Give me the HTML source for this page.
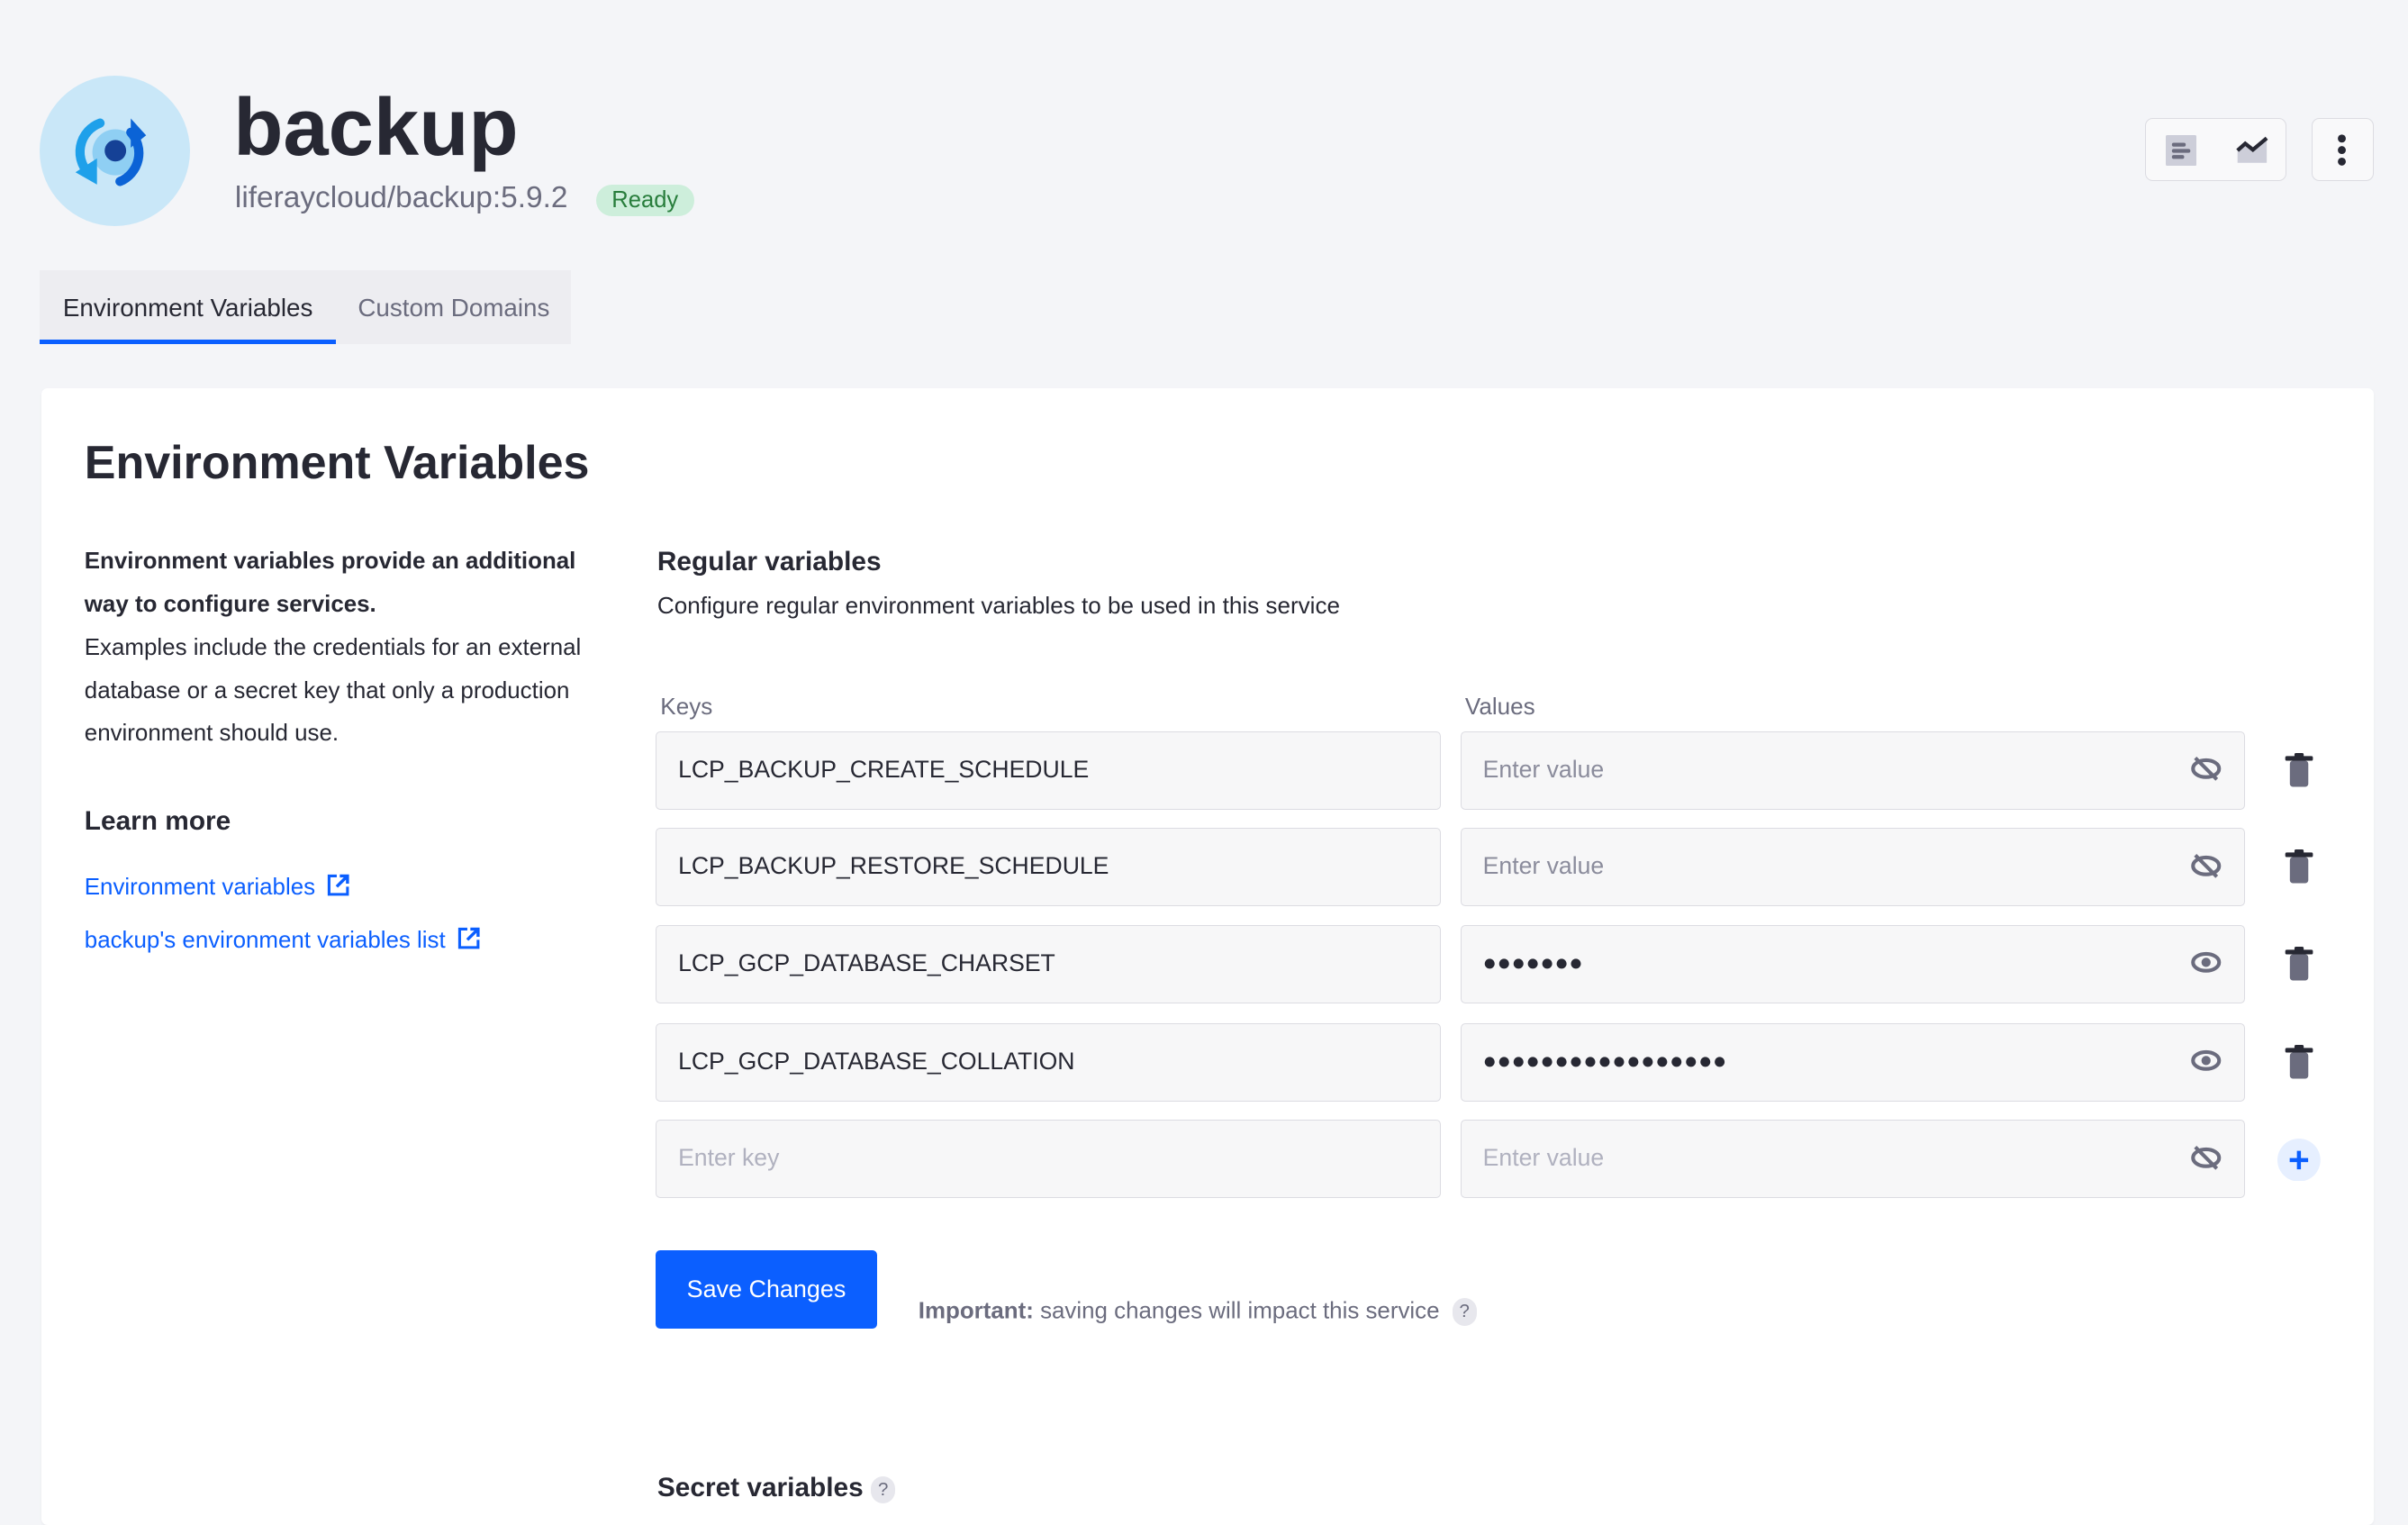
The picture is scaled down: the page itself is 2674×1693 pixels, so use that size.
<!DOCTYPE html>
<html><head><meta charset="utf-8"><style>
html,body{margin:0;padding:0;}
body{width:2674px;height:1662px;overflow:hidden;background:#f4f5f8;}
#r{zoom:1.70536;width:1568px;height:975px;position:relative;font-family:"Liberation Sans",sans-serif;color:#272833;}
.a{position:absolute;white-space:nowrap;}
.in{position:absolute;width:511px;height:51px;background:#f7f7f8;border:1px solid #dcdce2;border-radius:3px;box-sizing:border-box;font-size:15.6px;line-height:49px;padding-left:14px;color:#272833;}
.ph{color:#8b8c9c;}
.ph2{color:#b0b1bf;}
.dots{font-size:15px;letter-spacing:0.3px;color:#272833;}
.eye{position:absolute;right:14px;top:15px;}
.tr{position:absolute;left:1487px;}
</style></head><body><div id="r">
<div class="a" style="left:26px;top:49px;width:98px;height:98px;border-radius:50%;background:#c9e7f8;"></div>
<svg class="a" style="left:45px;top:72px" width="60" height="56" viewBox="0 0 60 56">
<circle cx="30" cy="27" r="15" fill="#8fcff3"/>
<path d="M20 8 A20 20 0 0 0 14 42" stroke="#1ea0ea" stroke-width="6" fill="none" stroke-linecap="round"/>
<path d="M4 40 L18 31 L18 48 Z" fill="#1ea0ea"/>
<path d="M40 14 A20 20 0 0 1 33 46" stroke="#0b63d6" stroke-width="6" fill="none" stroke-linecap="round"/>
<path d="M40 5 L50 16 L40 24 Z" fill="#0b63d6"/>
<circle cx="30" cy="26" r="7" fill="#154196"/>
</svg>
<div class="a" style="left:152px;top:51px;font-size:53px;font-weight:bold;line-height:64px;">backup</div>
<div class="a" style="left:153px;top:118px;font-size:19.6px;color:#6b6c7e;">liferaycloud/backup:5.9.2</div>
<div class="a" style="left:388px;top:120px;width:64px;height:21px;border-radius:11px;background:#cdeedb;color:#287d3c;font-size:15px;line-height:21px;text-align:center;">Ready</div>
<div class="a" style="left:1397px;top:77px;width:92px;height:41px;border:1px solid #dcdce2;border-radius:5px;background:#f9f9fa;box-sizing:border-box;"></div>
<svg class="a" style="left:1410px;top:88px" width="20" height="20"><rect x="0" y="0" width="20" height="20" rx="1" fill="#cdced9"/><rect x="4" y="5" width="9" height="2.5" rx="1.2" fill="#6b6c7e"/><rect x="4" y="9" width="12" height="2.5" rx="1.2" fill="#6b6c7e"/><rect x="4" y="13" width="8" height="2.5" rx="1.2" fill="#6b6c7e"/></svg>
<svg class="a" style="left:1456px;top:88px" width="22" height="20"><path d="M1 9 L6 5 L11 9 L20 2 L20 18 L1 18Z" fill="#cdced9"/><path d="M1 10 L6 5.5 L11 9.5 L20 2" stroke="#272833" stroke-width="2.5" fill="none"/></svg>
<div class="a" style="left:1505px;top:77px;width:41px;height:41px;border:1px solid #dcdce2;border-radius:5px;background:#f9f9fa;box-sizing:border-box;"></div>
<svg class="a" style="left:1520px;top:86px" width="10" height="24"><circle cx="5" cy="4" r="2.6" fill="#272833"/><circle cx="5" cy="11.5" r="2.6" fill="#272833"/><circle cx="5" cy="19" r="2.6" fill="#272833"/></svg>
<div class="a" style="left:26px;top:176px;width:346px;height:48px;background:#ededf1;"></div>
<div class="a" style="left:26px;top:221px;width:193px;height:3px;background:#0b5fff;"></div>
<div class="a" style="left:41px;top:191px;font-size:16.3px;color:#272833;">Environment Variables</div>
<div class="a" style="left:233px;top:191px;font-size:16.3px;color:#6b6c7e;">Custom Domains</div>
<div class="a" style="left:27px;top:253px;width:1519px;height:740px;background:#fff;border-radius:4px;box-shadow:0 1px 2px rgba(0,0,0,0.04);"></div>
<div class="a" style="left:55px;top:284px;font-size:30.5px;font-weight:bold;">Environment Variables</div>
<div class="a" style="left:55px;top:352px;font-size:15.2px;line-height:28px;white-space:normal;width:340px;"><b>Environment variables provide an additional way to configure services.</b><br>Examples include the credentials for an external database or a secret key that only a production environment should use.</div>
<div class="a" style="left:55px;top:525px;font-size:17.5px;font-weight:bold;">Learn more</div>
<div class="a" style="left:55px;top:568px;font-size:15.2px;color:#0b5fff;">Environment variables <svg width="16" height="16" style="vertical-align:-2px;margin-left:3px"><path d="M7 2H2V14H14V9" stroke="#0b5fff" stroke-width="1.8" fill="none"/><path d="M9 2H14V7M14 2L7 9" stroke="#0b5fff" stroke-width="2" fill="none"/></svg></div>
<div class="a" style="left:55px;top:603px;font-size:15.2px;color:#0b5fff;">backup's environment variables list <svg width="16" height="16" style="vertical-align:-2px;margin-left:3px"><path d="M7 2H2V14H14V9" stroke="#0b5fff" stroke-width="1.8" fill="none"/><path d="M9 2H14V7M14 2L7 9" stroke="#0b5fff" stroke-width="2" fill="none"/></svg></div>
<div class="a" style="left:428px;top:356px;font-size:17.5px;font-weight:bold;">Regular variables</div>
<div class="a" style="left:428px;top:385px;font-size:15.3px;">Configure regular environment variables to be used in this service</div>
<div class="a" style="left:430px;top:451px;font-size:15.3px;color:#6b6c7e;">Keys</div>
<div class="a" style="left:954px;top:451px;font-size:15.3px;color:#6b6c7e;">Values</div>

<div class="in" style="left:427px;top:476px;">LCP_BACKUP_CREATE_SCHEDULE</div>
<div class="in" style="left:427px;top:539px;">LCP_BACKUP_RESTORE_SCHEDULE</div>
<div class="in" style="left:427px;top:602px;">LCP_GCP_DATABASE_CHARSET</div>
<div class="in" style="left:427px;top:666px;">LCP_GCP_DATABASE_COLLATION</div>
<div class="in ph2" style="left:427px;top:729px;">Enter key</div>

<div class="in ph" style="left:951px;top:476px;">Enter value<svg class="eye" width="22" height="18" viewBox="0 0 22 18"><ellipse cx="11" cy="9" rx="8.5" ry="5.5" stroke="#6b6c7e" stroke-width="2.4" fill="none"/><path d="M4 2L18 16" stroke="#6b6c7e" stroke-width="2.4"/></svg></div>
<div class="in ph" style="left:951px;top:539px;">Enter value<svg class="eye" width="22" height="18" viewBox="0 0 22 18"><ellipse cx="11" cy="9" rx="8.5" ry="5.5" stroke="#6b6c7e" stroke-width="2.4" fill="none"/><path d="M4 2L18 16" stroke="#6b6c7e" stroke-width="2.4"/></svg></div>
<div class="in dots" style="left:951px;top:602px;">●●●●●●●<svg class="eye" width="22" height="18" viewBox="0 0 22 18"><ellipse cx="11" cy="9" rx="8.5" ry="5.5" stroke="#6b6c7e" stroke-width="2.4" fill="none"/><circle cx="11" cy="9" r="3" fill="#6b6c7e"/></svg></div>
<div class="in dots" style="left:951px;top:666px;">●●●●●●●●●●●●●●●●●<svg class="eye" width="22" height="18" viewBox="0 0 22 18"><ellipse cx="11" cy="9" rx="8.5" ry="5.5" stroke="#6b6c7e" stroke-width="2.4" fill="none"/><circle cx="11" cy="9" r="3" fill="#6b6c7e"/></svg></div>
<div class="in ph2" style="left:951px;top:729px;">Enter value<svg class="eye" width="22" height="18" viewBox="0 0 22 18"><ellipse cx="11" cy="9" rx="8.5" ry="5.5" stroke="#6b6c7e" stroke-width="2.4" fill="none"/><path d="M4 2L18 16" stroke="#6b6c7e" stroke-width="2.4"/></svg></div>

<svg class="tr" style="top:490px" width="20" height="24" viewBox="0 0 20 24"><rect x="7" y="0" width="6" height="3" rx="1" fill="#272833"/><rect x="1" y="2" width="18" height="3" rx="1" fill="#272833"/><rect x="4" y="5" width="12" height="17" rx="2" fill="#6b6c7e"/></svg>
<svg class="tr" style="top:553px" width="20" height="24" viewBox="0 0 20 24"><rect x="7" y="0" width="6" height="3" rx="1" fill="#272833"/><rect x="1" y="2" width="18" height="3" rx="1" fill="#272833"/><rect x="4" y="5" width="12" height="17" rx="2" fill="#6b6c7e"/></svg>
<svg class="tr" style="top:616px" width="20" height="24" viewBox="0 0 20 24"><rect x="7" y="0" width="6" height="3" rx="1" fill="#272833"/><rect x="1" y="2" width="18" height="3" rx="1" fill="#272833"/><rect x="4" y="5" width="12" height="17" rx="2" fill="#6b6c7e"/></svg>
<svg class="tr" style="top:680px" width="20" height="24" viewBox="0 0 20 24"><rect x="7" y="0" width="6" height="3" rx="1" fill="#272833"/><rect x="1" y="2" width="18" height="3" rx="1" fill="#272833"/><rect x="4" y="5" width="12" height="17" rx="2" fill="#6b6c7e"/></svg>
<svg class="a" style="left:1483px;top:741px" width="28" height="28"><circle cx="14" cy="14" r="14" fill="#e6efff"/><path d="M14 8V20M8 14H20" stroke="#0b5fff" stroke-width="2.6"/></svg>

<div class="a" style="left:427px;top:814px;width:144px;height:51px;background:#0b5fff;border-radius:3px;color:#fff;font-size:15.8px;line-height:51px;text-align:center;">Save Changes</div>
<div class="a" style="left:598px;top:845px;font-size:15.2px;color:#6b6c7e;"><b>Important:</b> saving changes will impact this service <span style="display:inline-block;width:16px;height:18px;border-radius:8px;background:#e7e7ed;font-size:12px;line-height:18px;text-align:center;margin-left:4px;vertical-align:1px;">?</span></div>
<div class="a" style="left:428px;top:959px;font-size:17.5px;font-weight:bold;">Secret variables <span style="display:inline-block;width:16px;height:18px;border-radius:8px;background:#e7e7ed;font-size:12px;line-height:18px;text-align:center;font-weight:normal;color:#6b6c7e;vertical-align:1px;">?</span></div>
</div></body></html>
